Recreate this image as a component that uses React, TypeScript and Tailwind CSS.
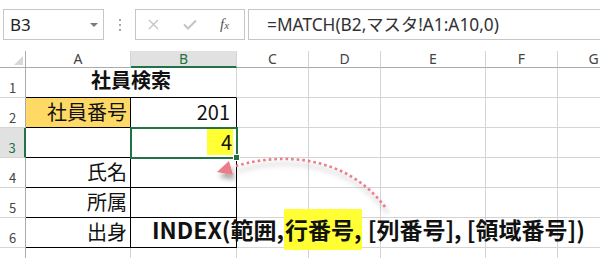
import React from 'react';

const grid = 'grid grid-cols-[26px_105px_106px_72px_72px_105px_72px_72px]';
const jp = "font-['Noto_Sans_CJK_JP',sans-serif]";
const ui = "font-['Noto_Sans','Noto_Sans_CJK_JP',sans-serif]";

const Blank = ({ n }: { n: number }) => (
  <>
    {Array.from({ length: n }).map((_, i) => (
      <div key={i} className="border-r border-b border-[#d4d4d4]" />
    ))}
  </>
);

const RowHead = ({ n, active }: { n?: number; active?: boolean }) => (
  <div
    className={`flex items-end justify-center pb-[1px] text-[13px] leading-none border-b border-[#d4d4d4] ${
      active ? 'bg-[#e1e1e1] text-[#217346] border-r-2 border-r-[#217346]' : 'text-[#444] border-r border-r-[#ababab]'
    }`}
  >
    {n && <span className="pb-[2px]">{n}</span>}
  </div>
);

const FormulaBar = () => (
  <div className={`h-[51px] flex items-start pt-[9px] ${ui}`}>
    <div className="ml-[3px] w-[101px] h-[31px] border border-[#c6c6c6] flex items-center justify-between pl-[6px] pr-[5px]">
      <span className="text-[17px] text-[#222] leading-none">B3</span>
      <svg width="8" height="4" viewBox="0 0 8 4">
        <polygon points="0,0 8,0 4,4" fill="#7a7a7a" />
      </svg>
    </div>
    <div className="w-[31px] h-[31px] flex flex-col items-center justify-center gap-[3px]">
      <span className="w-[2px] h-[2px] bg-[#a6a6a6]" />
      <span className="w-[2px] h-[2px] bg-[#a6a6a6]" />
      <span className="w-[2px] h-[2px] bg-[#a6a6a6]" />
    </div>
    <div className="w-[110px] h-[31px] border border-[#c6c6c6] flex items-center">
      <svg className="ml-[12px]" width="11" height="11" viewBox="0 0 11 11">
        <path d="M1 1 L10 10 M10 1 L1 10" stroke="#c4c4c4" strokeWidth="1.4" />
      </svg>
      <svg className="ml-[24px]" width="14" height="11" viewBox="0 0 14 11">
        <path d="M1 5.5 L5 9.5 L13 1.5" stroke="#c4c4c4" strokeWidth="2" fill="none" />
      </svg>
      <span className="ml-[23px] font-['Liberation_Serif',serif] italic text-[#555] text-[15px] leading-none">
        f<span className="text-[11px]">x</span>
      </span>
    </div>
    <div className="ml-[3px] flex-1 h-[31px] border border-r-0 border-[#c6c6c6] flex items-center pl-[18px]">
      <span className="text-[17.3px] text-[#333] leading-none whitespace-nowrap">=MATCH(B2,マスタ!A1:A10,0)</span>
    </div>
  </div>
);

export default function App() {
  return (
    <div className="w-[600px] h-[258px] overflow-hidden bg-white relative">
      <FormulaBar />

      {/* column headers */}
      <div className={`${grid} h-[17px] ${ui} text-[14px] leading-none`}>
        <div className="relative border-r border-r-[#ababab] border-b border-b-[#ababab]">
          <svg className="absolute left-[14px] top-[5px]" width="9" height="9" viewBox="0 0 9 9">
            <polygon points="9,0 9,9 0,9" fill="#d8d8d8" />
          </svg>
        </div>
        {['A', 'B', 'C', 'D', 'E', 'F', 'G'].map((c) => (
          <div
            key={c}
            className={`flex items-center justify-center border-r border-r-[#d4d4d4] ${
              c === 'B'
                ? 'bg-[#e1e1e1] text-[#217346] border-b-2 border-b-[#217346]'
                : 'text-[#444] border-b border-b-[#ababab]'
            }`}
          >
            {c}
          </div>
        ))}
      </div>

      {/* rows */}
      <div className={`${grid} auto-rows-[30px] ${jp} text-[20px] text-[#111] leading-none`}>
        {/* 1 */}
        <RowHead n={1} />
        <div className="col-span-2 flex items-center justify-center pb-[6px] font-bold border-r border-r-[#d4d4d4] border-b border-b-black">
          社員検索
        </div>
        <Blank n={5} />

        {/* 2 */}
        <RowHead n={2} />
        <div className="bg-[#ffd966] flex items-center justify-end pr-[3px] pb-[2px] border-r border-b border-black">社員番号</div>
        <div className="flex items-center justify-end pr-[6px] pb-[2px] border-r border-b border-black">201</div>
        <Blank n={5} />

        {/* 3 */}
        <RowHead n={3} active />
        <div className="border-r border-b border-black" />
        <div className="relative flex items-center justify-end pr-[3px] border-r border-b border-black">
          <span className="w-[26px] h-[26px] bg-[#ffff33] flex items-center justify-end pr-[1px] mt-[-2px]">4</span>
          <div className="absolute -left-[1px] -top-[1px] w-[108px] h-[32px] border-2 border-[#217346]" />
          <div className="absolute left-[102px] top-[26px] w-[7px] h-[7px] bg-[#217346] border border-white" />
        </div>
        <Blank n={5} />

        {/* 4-6 */}
        {['氏名', '所属', '出身'].map((t, i) => (
          <React.Fragment key={t}>
            <RowHead n={i + 4} />
            <div className="flex items-center justify-end pr-[3px] pb-[1px] border-r border-b border-black">{t}</div>
            <div className="border-r border-b border-black" />
            <Blank n={5} />
          </React.Fragment>
        ))}

        {/* 7 (cut off) */}
        <RowHead />
        <Blank n={7} />
      </div>

      {/* annotation: formula text */}
      <div className={`absolute left-[152px] top-[209px] h-[41px] flex items-center whitespace-nowrap ${jp} font-bold text-[23px] text-[#111] leading-none`}>
        <span>INDEX(範囲,</span>
        <span className="bg-[#ffff33] h-[41px] flex items-center px-[1px]">行番号,</span>
        <span>&nbsp;[列番号], [領域番号])</span>
      </div>

      {/* annotation: dotted arrow */}
      <svg className="absolute left-0 top-0 pointer-events-none" width="600" height="258" viewBox="0 0 600 258">
        <defs>
          <filter id="sh" x="-20%" y="-50%" width="140%" height="200%">
            <feDropShadow dx="2" dy="5" stdDeviation="2.5" floodColor="#000" floodOpacity="0.35" />
          </filter>
        </defs>
        <g filter="url(#sh)">
          <path
            d="M385 207 C350 160 290 150 236 166"
            fill="none"
            stroke="#ea7d88"
            strokeWidth="2.6"
            strokeDasharray="2.6 3"
          />
          <polygon points="217,172 229,161 233,175" fill="#ea7d88" />
        </g>
      </svg>
    </div>
  );
}
